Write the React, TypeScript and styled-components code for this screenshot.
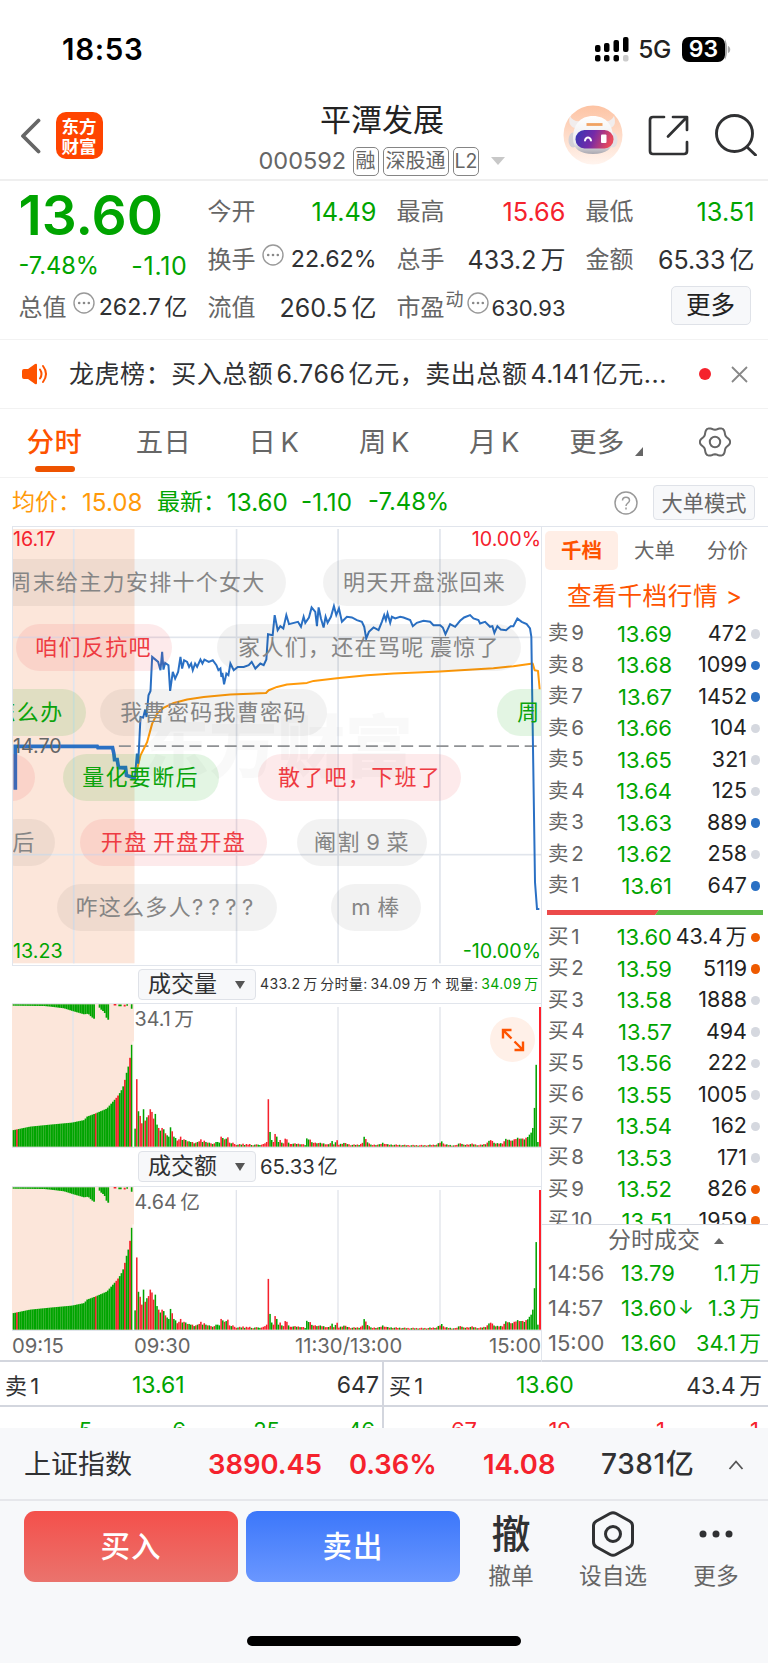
import React from "react";
import styled, { createGlobalStyle } from "styled-components";

const C = {
  green: "#00a400",
  red: "#f5222d",
  orange: "#fe5300",
  ink: "#303133",
  gray: "#666666",
  line: "#e1e5ec",
  soft: "#f7f8fa",
};

const Global = createGlobalStyle`
  *, *::before, *::after { box-sizing: border-box; }
  html, body { margin: 0; padding: 0; background: #fff; }
  body { font-family: Inter, "Noto Sans CJK SC", sans-serif; color: ${C.ink}; }
`;

const Screen = styled.main`
  width: 768px;
  height: 1663px;
  overflow: hidden;
  background: #fff;
  display: flex;
  flex-direction: column;
`;

interface TextProps {
  $size?: number;
  $color?: string;
  $weight?: number;
  $track?: number;
  $w?: number;
  $align?: string;
}

const Text = styled.span<TextProps>`
  display: block;
  flex: none;
  white-space: nowrap;
  font-size: ${(p) => p.$size ?? 24}px;
  color: ${(p) => p.$color ?? C.ink};
  font-weight: ${(p) => p.$weight ?? 400};
  letter-spacing: ${(p) => p.$track ?? 0}px;
  width: ${(p) => (p.$w ? `${p.$w}px` : "auto")};
  text-align: ${(p) => p.$align ?? "left"};
  line-height: 1.2;
`;

const Tight = styled(Text)`
  word-spacing: -3px;
`;

/* ---------- status bar ---------- */

const StatusBar = styled.header`
  height: 80px;
  padding: 19px 37px 0 62px;
  display: flex;
  align-items: center;
  justify-content: space-between;
  flex: none;
`;

const StatusRight = styled.div`
  display: flex;
  align-items: center;
`;

const Battery = styled.div`
  width: 43px;
  height: 25px;
  margin-left: 11px;
  border-radius: 7px;
  background: #000;
  color: #fff;
  font-size: 23px;
  font-weight: 600;
  line-height: 25px;
  text-align: center;
`;

/* ---------- title bar ---------- */

const TitleBar = styled.div`
  height: 101px;
  flex: none;
  border-bottom: 2px solid #efefef;
  display: grid;
  grid-template-columns: 256px 1fr 260px;
`;

const TitleLeft = styled.div`
  display: flex;
  align-items: center;
  padding: 12px 0 0 20px;
  gap: 14.5px;
`;

const Logo = styled.div`
  width: 47px;
  height: 47px;
  border-radius: 10px;
  background: #ff4400;
  color: #fff;
  font-family: "Noto Sans CJK SC", sans-serif;
  font-weight: 700;
  font-size: 17.5px;
  line-height: 19.5px;
  text-align: center;
  padding-top: 4px;
`;

const TitleMid = styled.div`
  display: flex;
  flex-direction: column;
  align-items: center;
  padding-top: 19px;
`;

const StockName = styled.h1`
  margin: 0;
  font-size: 31px;
  font-weight: 400;
  line-height: 42px;
  color: #222;
`;

const CodeRow = styled.div`
  height: 30px;
  margin-top: 5px;
  display: flex;
  align-items: center;
  gap: 4px;
`;

const Badge = styled.span<{ $snug?: boolean }>`
  border: 1.5px solid #858585;
  border-radius: 5px;
  height: 29px;
  padding: 0 ${(p) => (p.$snug ? 1 : 2)}px;
  font-size: ${(p) => (p.$snug ? 19.5 : 20)}px;
  line-height: 26px;
  color: ${C.gray};
`;

const TitleRight = styled.div`
  display: flex;
  align-items: center;
  padding: 11px 11px 0 54.5px;
  justify-content: space-between;
`;

/* ---------- quote ---------- */

const Quote = styled.section`
  height: 159px;
  flex: none;
  border-bottom: 1.5px solid #f2f2f2;
  padding: 7px 13px 0 18.5px;
  display: grid;
  grid-template-columns: repeat(4, 169px);
  column-gap: 20px;
  grid-template-rows: 48px 48px 48px;
`;

const Cell = styled.div`
  display: flex;
  align-items: center;
  justify-content: space-between;
`;

const BigPrice = styled(Cell)`
  padding-top: 6px;
`;

const PriceDelta = styled(Cell)`
  padding-top: 12px;
`;

const Group = styled.div`
  display: flex;
  align-items: center;
`;

const MoreButton = styled.button`
  width: 80px;
  height: 39px;
  margin: 0 4px 6px auto;
  padding: 0;
  border: 1.5px solid #dfe2e8;
  border-radius: 5px;
  background: ${C.soft};
  font: inherit;
  font-size: 24.5px;
  line-height: 34px;
  color: #222;
`;

const Raised = styled.span`
  align-self: flex-start;
  font-size: 18px;
  line-height: 20px;
  margin: -4px 3px 0 1px;
  color: ${C.gray};
`;

/* ---------- news ---------- */

const News = styled.section`
  height: 69px;
  flex: none;
  border-bottom: 1.5px solid #f2f2f2;
  padding: 0 20px 0 22px;
  display: flex;
  align-items: center;
`;

const NewsText = styled(Text)`
  margin-left: 21px;
  word-spacing: -4.5px;
`;

const RedDot = styled.i`
  width: 12px;
  height: 12px;
  border-radius: 50%;
  background: ${C.red};
  margin-left: auto;
`;

const CloseSvg = styled.svg`
  margin-left: 20px;
`;

/* ---------- tabs ---------- */

const Tabs = styled.nav`
  height: 69px;
  flex: none;
  border-bottom: 1.5px solid #f2f2f2;
  display: grid;
  grid-template-columns: 109px 109px 112px 109px 111px 112px 1fr;
`;

const Tab = styled.div<{ $on?: boolean }>`
  display: flex;
  flex-direction: column;
  align-items: center;
  padding-top: 14px;
  font-size: 27.3px;
  line-height: 40px;
  letter-spacing: 0.5px;
  word-spacing: -4px;
  color: ${(p) => (p.$on ? C.orange : C.gray)};
  font-weight: ${(p) => (p.$on ? 500 : 400)};
  &::after {
    content: "";
    width: 40px;
    height: 6px;
    margin-top: 3px;
    border-radius: 3px;
    background: ${(p) => (p.$on ? "#ee5300" : "transparent")};
  }
`;

const Corner = styled.i`
  display: inline-block;
  margin-left: 10px;
  border-left: 8px solid transparent;
  border-bottom: 9px solid ${C.gray};
  transform: translateY(4px);
`;

const GearSvg = styled.svg`
  margin-top: 3px;
`;

/* ---------- summary ---------- */

const Summary = styled.section`
  height: 48px;
  flex: none;
  padding: 1px 13px 0 12px;
  display: flex;
  align-items: center;
`;

const ModeButton = styled.button`
  width: 102px;
  height: 35px;
  margin-left: 15px;
  padding: 0;
  border: 1.5px solid #dfe2e8;
  border-radius: 4px;
  background: ${C.soft};
  font: inherit;
  font-size: 21.2px;
  line-height: 30px;
  color: ${C.gray};
`;

/* ---------- main area ---------- */

const Main = styled.section`
  height: 836px;
  flex: none;
  display: grid;
  grid-template-columns: 542px 226px;
  border-bottom: 2px solid #d3d6de;
`;

const ChartColumn = styled.div`
  padding-left: 12px;
  border-right: 1px solid ${C.line};
  display: flex;
  flex-direction: column;
`;

const PriceChart = styled.div`
  position: relative;
  height: 440px;
  flex: none;
  overflow: hidden;
  border-top: 1.5px solid ${C.line};
  border-left: 1px solid ${C.line};
  border-bottom: 1.5px solid ${C.line};
`;

const Plot = styled.svg`
  display: block;
  width: 100%;
  height: 100%;
`;

const AxisMark = styled.span<{ $color: string; $right?: boolean; $top: number }>`
  position: absolute;
  top: ${(p) => p.$top}px;
  ${(p) => (p.$right ? "right: 0;" : "left: 0;")}
  font-size: 19.7px;
  line-height: 22px;
  color: ${(p) => p.$color};
`;

const tones = {
  gray: ["rgba(0,0,0,.05)", "#858585"],
  red: ["rgba(235,50,60,.1)", "#ee3b42"],
  green: ["rgba(0,164,0,.11)", "#0ba30b"],
};
type Tone = keyof typeof tones;

const Bullet = styled.span<{ $tone: Tone; $x: number; $row: number; $w: number }>`
  position: absolute;
  left: ${(p) => p.$x}px;
  top: ${(p) => 32 + p.$row * 65}px;
  width: ${(p) => p.$w}px;
  height: 47px;
  border-radius: 24px;
  background: ${(p) => tones[p.$tone][0]};
  color: ${(p) => tones[p.$tone][1]};
  text-align: center;
  white-space: pre;
  font-size: 22px;
  letter-spacing: 1.3px;
  word-spacing: -2px;
  line-height: 46px;
`;

const Marks = styled.span`
  letter-spacing: 5.4px;
`;

const Watermark = styled.span`
  position: absolute;
  left: 128px;
  top: 176px;
  font-family: "Noto Sans CJK SC", sans-serif;
  font-weight: 900;
  font-size: 68px;
  line-height: 80px;
  color: rgba(90, 90, 100, 0.04);
`;

const IndicatorBar = styled.div<{ $h: number }>`
  height: ${(p) => p.$h}px;
  flex: none;
  border-bottom: 1.5px solid ${C.line};
  padding-left: 126px;
  display: flex;
  align-items: center;
`;

const IndicatorText = styled(Text)`
  word-spacing: -1.5px;
`;

const Green = styled.b`
  font-weight: 400;
  color: ${C.green};
`;

const Select = styled.div`
  width: 118px;
  height: 31px;
  flex: none;
  border: 1.5px solid #dfe2e8;
  border-radius: 4px;
  background: ${C.soft};
  display: flex;
  align-items: center;
  justify-content: space-between;
  padding: 0 10px 0 9px;
  margin-right: 4px;
`;

const DownCaret = styled.i`
  border-left: 5px solid transparent;
  border-right: 5px solid transparent;
  border-top: 8px solid #555;
`;

const UpCaret = styled.i`
  border-left: 5.5px solid transparent;
  border-right: 5.5px solid transparent;
  border-bottom: 6.5px solid #666;
  margin-left: 14px;
`;

const VolumeChart = styled.div`
  position: relative;
  height: 144px;
  flex: none;
  border-bottom: 1.5px solid ${C.line};
`;

const PeakMark = styled.span`
  position: absolute;
  left: 122.5px;
  top: 1px;
  font-size: 19.7px;
  line-height: 28px;
  word-spacing: -2px;
  color: ${C.gray};
`;

const Expand = styled.span`
  position: absolute;
  left: 478px;
  top: 13px;
  width: 45px;
  height: 45px;
  border-radius: 50%;
  background: #fff0e8;
  display: flex;
  align-items: center;
  justify-content: center;
`;

const TimeAxis = styled.div`
  flex: 1;
  display: grid;
  grid-template-columns: 122px 161px 1fr auto;
  align-items: center;
`;

/* ---------- order book ---------- */

const Book = styled.aside`
  display: flex;
  flex-direction: column;
  border-top: 1.5px solid ${C.line};
  min-width: 0;
`;

const BookTabs = styled.div`
  height: 39px;
  margin-top: 3.5px;
  padding-left: 3px;
  display: grid;
  grid-template-columns: 73px 73px 73px;
  flex: none;
`;

const BookTab = styled.div<{ $on?: boolean }>`
  border-radius: 5px;
  background: ${(p) => (p.$on ? "#ffeee6" : "transparent")};
  color: ${(p) => (p.$on ? C.orange : C.gray)};
  font-weight: ${(p) => (p.$on ? 700 : 400)};
  font-size: 20.5px;
  line-height: 39px;
  text-align: center;
`;

const BookLink = styled.div`
  height: 48.5px;
  flex: none;
  color: ${C.orange};
  font-size: 24.6px;
  line-height: 52px;
  letter-spacing: 0.6px;
  padding-left: 25px;
  white-space: nowrap;
`;

const Levels = styled.div<{ $h: number }>`
  height: ${(p) => p.$h}px;
  flex: none;
  overflow: hidden;
`;

const Level = styled.div`
  height: 31.5px;
  padding-left: 6px;
  display: grid;
  grid-template-columns: 50px 74px 75px 13px;
  align-items: center;
`;

const Dot = styled.i<{ $c: string }>`
  width: 9.5px;
  height: 9.5px;
  border-radius: 50%;
  background: ${(p) => p.$c};
  justify-self: end;
`;

const Ratio = styled.svg`
  display: block;
  flex: none;
  width: 216px;
  height: 5px;
  margin: 8px 0 7px 5px;
`;

const TradesHead = styled.div`
  height: 33px;
  flex: none;
  border-top: 1.5px solid #d9dce3;
  padding-left: 66px;
  display: flex;
  align-items: center;
`;

const Trade = styled.div`
  height: 35px;
  flex: none;
  padding: 0 7px 2px 6px;
  display: grid;
  grid-template-columns: 73px 57px 16px 1fr;
  align-items: center;
`;

/* ---------- best quotes ---------- */

const BestRow = styled.div`
  height: 45px;
  flex: none;
  display: grid;
  grid-template-columns: 382px 386px;
  border-bottom: 2px solid #d3d6de;
`;

const Best = styled.div`
  display: grid;
  grid-template-columns: 56px 1fr auto;
  align-items: center;
  padding: 5px 3px 0 5px;
  & + & {
    border-left: 2px solid #d3d6de;
    padding-right: 6px;
  }
`;

const BestPrice = styled.div`
  display: flex;
  padding-left: 71px;
`;

const QueueRow = styled.div`
  height: 21px;
  flex: none;
  overflow: hidden;
  display: grid;
  grid-template-columns: 382px 386px;
`;

const Queue = styled.div<{ $c: string }>`
  display: grid;
  grid-template-columns: 92px 94px 94px 95px;
  font-size: 22px;
  line-height: 26px;
  padding-top: 10px;
  text-align: right;
  color: ${(p) => p.$c};
  & + & {
    border-left: 2px solid #d3d6de;
    grid-template-columns: 93px 94px 94px 94px;
  }
`;

/* ---------- footer ---------- */

const IndexBar = styled.section`
  height: 72.5px;
  flex: none;
  background: ${C.soft};
  border-bottom: 2px solid #e6e7eb;
  padding: 3px 24px 0;
  display: flex;
  align-items: center;
`;

const Footer = styled.footer`
  flex: 1;
  background: ${C.soft};
  display: flex;
  flex-direction: column;
  align-items: center;
  justify-content: space-between;
  padding: 10.5px 0 17px;
`;

const Actions = styled.div`
  width: 100%;
  display: flex;
  padding-left: 24px;
`;

const TradeButton = styled.button<{ $from: string; $to: string }>`
  width: 214px;
  height: 71px;
  margin-right: 8px;
  padding: 0;
  border: 0;
  border-radius: 11px;
  background: linear-gradient(${(p) => p.$from}, ${(p) => p.$to});
  color: #fff;
  font: inherit;
  font-size: 29.5px;
  font-weight: 500;
  line-height: 69px;
  letter-spacing: 1px;
`;

const Action = styled.div<{ $w: number }>`
  width: ${(p) => p.$w}px;
  display: flex;
  flex-direction: column;
  align-items: center;
  gap: 4.5px;
`;

const ActionIcon = styled.div`
  height: 46px;
  display: flex;
  align-items: center;
  font-size: 39px;
  font-weight: 500;
  line-height: 46px;
`;

const HomeIndicator = styled.div`
  width: 274px;
  height: 10px;
  border-radius: 5px;
  background: #000;
`;

/* ---------- chart data ---------- */

const pricePath =
  "44,806 44,678 290,678 292,682 336,683 340,700 342,718 350,720 354,742 375,745 378,765 385,768 403,775 409,700 413,730 420,590 428,592 434,568 438,590 444,525 450,512 455,410 473,425 480,450 485,395 489,448 494,428 504,435 509,512 517,455 524,475 533,455 540,410 545,445 551,420 560,425 566,440 572,430 577,450 584,430 590,440 600,418 606,430 612,418 625,425 637,420 648,435 654,450 660,445 663,470 666,458 671,492 678,460 684,465 690,430 700,450 712,440 730,440 745,435 754,425 765,445 780,430 790,435 798,418 803,342 817,345 823,285 832,330 840,318 849,325 858,285 866,312 893,305 902,320 910,290 915,308 926,292 934,262 945,275 950,318 955,262 962,295 970,322 976,290 982,308 992,290 1001,258 1008,285 1016,265 1025,305 1040,290 1055,292 1070,300 1085,305 1092,320 1098,355 1106,335 1120,322 1135,330 1145,305 1152,285 1157,300 1162,280 1170,308 1175,290 1185,295 1200,290 1210,292 1230,300 1238,318 1250,308 1270,302 1290,305 1300,315 1320,315 1328,322 1336,342 1350,312 1365,320 1380,302 1392,292 1410,285 1420,295 1435,300 1440,310 1455,305 1470,320 1477,318 1483,338 1492,318 1502,328 1518,330 1532,318 1540,318 1552,295 1565,305 1580,312 1590,325 1594,350 1605,1085 1611,1165 1618,1165";
const averagePath =
  "403,775 420,705 440,665 455,610 470,580 490,562 520,548 560,538 610,530 690,523 797,518 805,510 830,500 860,493 920,488 940,482 1010,474 1100,465 1180,460 1320,454 1480,444 1540,438 1598,430 1604,450 1614,452 1619,507";

const lerp = (knots: number[][], x: number) => {
  for (let i = 1; i < knots.length; i++) {
    if (x <= knots[i][0]) {
      const [x0, y0] = knots[i - 1];
      const [x1, y1] = knots[i];
      return y0 + ((y1 - y0) * (x - x0)) / (x1 - x0);
    }
  }
  return knots[knots.length - 1][1];
};

const auctionKnots = [[37, 49], [90, 60], [150, 66], [215, 72], [254, 80], [258, 89], [285, 99], [320, 114], [350, 148], [362, 165], [371, 185], [377, 214], [383, 233], [389, 262], [396, 315]];
const auctionRed = [2, 48, 60, 61, 65, 68];
const hangKnots = [[37, 4], [130, 5], [150, 7], [190, 12], [215, 20], [250, 30], [262, 28], [272, 38], [284, 46]];
const hangTail = [10, 16, 20, 26, 40, 46];

/* one entry per minute: bar height, negative for a falling minute */
const openBars = [-54, 202, -106, 92, 70, -112, 78, -88, 94, 112, 104, 84, -98, -66, 56, -48, 56, -52, 40, -34, -30, -58, 46, -30, -26, 18, 22, 30, -20, 22, -20, 16, -16, -14, 14, -10, 12, -14, 16, 22, -14, 18, -14, 12, -12, 10, -8, 10, -14, -14, -12, 30, -26, 22, -24, 28, 12, -10, 12, 8, 5, -6, 8, -6, 9, -5, 8, 6, 8, -5, 4, -6, 7, -6, -5, 6, 8, 10, 14, 142, -44, -20, 14, 38, -30, -14, 20, -12, 10, 24, 22, -12, 8];
const laterKnots = [[0, 9], [5, 8], [8, 5], [9, 24], [11, 21], [12, 12], [18, 10], [22, 6], [24, 16], [25, 8], [27, 18], [28, 6], [31, 11], [35, 5], [40, 6], [42, 10], [43, 30], [45, 14], [47, 5], [52, 6], [54, 11], [57, 6], [70, 4], [80, 4], [86, 6], [89, 15], [91, 6], [97, 3], [100, 11], [102, 5], [107, 8], [111, 4], [115, 8], [118, 20], [121, 9], [125, 10], [127, 22], [131, 18], [134, 26], [138, 22], [140, 30], [142, 42], [143, 56], [144, 116], [145, 245], [146, 14], [147, 0]];

interface Bar { x: number; h: number; up: boolean; w: number; session: boolean }

const bars: Bar[] = [];
for (let i = 0; i < 70; i++) {
  const x = 38 + i * 5.14;
  bars.push({ x, h: lerp(auctionKnots, x + 2), up: auctionRed.includes(i), w: 5.3, session: false });
}
openBars.forEach((h, i) => bars.push({ x: 403 + i * 5.06, h: Math.abs(h), up: h > 0, w: 4.6, session: true }));
for (let i = 0; i < 148; i++) {
  const wobble = ((i * 7) % 5) / 5;
  bars.push({
    x: 402 + (93 + i) * 5.06,
    h: Math.max(0, lerp(laterKnots, i) + (i < 141 ? wobble * 3 - 1 : 0)),
    up: i < 140 && (i * 11) % 7 < 4 && i !== 43 && i !== 9,
    w: 4.6,
    session: true,
  });
}

function VolumePlot({ scale }: { scale: number }) {
  const base = 427;
  return (
    <Plot viewBox="36 0 1587 428" preserveAspectRatio="none">
      <rect x="36" y="0" width="366" height="427" fill="#fce6da" />
      {[218, 708, 1013, 1319].map((x) => (
        <rect key={x} x={x - 1} y="9" width="4" height="418" fill="#e1e4eb" />
      ))}
      {bars.map((b, i) => {
        const h = b.session ? b.h * scale : b.h;
        return <rect key={i} x={b.x} y={base - h} width={b.w} height={h} fill={b.up ? C.red : C.green} />;
      })}
      <rect x="397" y="112" width="5" height="315" fill="#fff" opacity=".7" />
      <rect x="1617" y="9" width="6" height="418" fill="#ff1f2b" />
      {Array.from({ length: 48 }, (_, i) => {
        const x = 38 + i * 5.14;
        return <rect key={i} x={x} y="1" width="5.3" height={lerp(hangKnots, x)} fill={C.green} />;
      })}
      {hangTail.map((h, i) => (
        <rect key={i} x={296 + i * 5.2} y="1" width="5.4" height={h} fill={C.green} />
      ))}
      <path d="M341 2h8M371 5h6" stroke={C.red} strokeWidth="5" />
      <path d="M355 4h10M379 3h5M395 1v13" stroke={C.green} strokeWidth="5" />
    </Plot>
  );
}

function PricePlot() {
  return (
    <Plot viewBox="37 21 1586 1312" preserveAspectRatio="none">
      <rect x="37" y="27" width="365" height="1301" fill="#fce6da" />
      <g fill="#e1e5ec">
        {[217, 706, 1011, 1317].map((x) => (
          <rect key={x} x={x} y="27" width="5" height="1301" />
        ))}
        <rect x="37" y="349" width="1586" height="5" />
        <rect x="37" y="1000" width="1586" height="5" />
      </g>
      <path d="M355 677.5H1618" stroke="#8f9194" strokeWidth="5.5" strokeDasharray="36 17" />
      <polyline points={averagePath} fill="none" stroke="#ff9a0a" strokeWidth="6" strokeLinejoin="round" />
      <polyline points={pricePath} fill="none" stroke="#2a70c4" strokeWidth="6" strokeLinejoin="miter" />
      <path d="M44 808V678H290L292 682H336L340 700L342 718H350L354 742H375L378 765L403 773" fill="none" stroke="#2a70c4" strokeWidth="11" />
    </Plot>
  );
}

const bullets: [Tone, number, number, number, React.ReactNode][] = [
  ["gray", 0, -24, 297, "周末给主力安排十个女大"],
  ["gray", 0, 310, 203, "明天开盘涨回来"],
  ["red", 1, 2.5, 156, "咱们反抗吧"],
  ["gray", 1, 204, 304, "家人们，还在骂呢 震惊了"],
  ["green", 2, -42, 115, "怎么办"],
  ["gray", 2, 87, 227, "我曹密码我曹密码"],
  ["green", 2, 483.5, 88, "周一"],
  ["red", 3, -70, 92, "龟"],
  ["green", 3, 49.5, 156, "量化要断后"],
  ["red", 3, 245, 203, "散了吧，下班了"],
  ["gray", 4, -20, 62, "后"],
  ["red", 4, 67, 187, "开盘 开盘开盘"],
  ["gray", 4, 284, 130, "阉割 9 菜"],
  ["gray", 5, 44, 220, <React.Fragment key="m">咋这么多人<Marks>????</Marks></React.Fragment>],
  ["gray", 5, 318, 90, "m 棒"],
];

const IDLE = "#d5d8df";
const BLUE = "#2a70c4";
const HOT = "#ee5a00";

const sells: [string, string, string, string][] = [
  ["9", "13.69", "472", IDLE],
  ["8", "13.68", "1099", BLUE],
  ["7", "13.67", "1452", BLUE],
  ["6", "13.66", "104", IDLE],
  ["5", "13.65", "321", IDLE],
  ["4", "13.64", "125", IDLE],
  ["3", "13.63", "889", BLUE],
  ["2", "13.62", "258", IDLE],
  ["1", "13.61", "647", BLUE],
];
const buys: [string, string, string, string][] = [
  ["1", "13.60", "43.4 万", HOT],
  ["2", "13.59", "5119", HOT],
  ["3", "13.58", "1888", IDLE],
  ["4", "13.57", "494", IDLE],
  ["5", "13.56", "222", IDLE],
  ["6", "13.55", "1005", IDLE],
  ["7", "13.54", "162", IDLE],
  ["8", "13.53", "171", IDLE],
  ["9", "13.52", "826", HOT],
  ["10", "13.51", "1959", HOT],
];
const trades = [
  ["14:56", "13.79", "", "1.1 万"],
  ["14:57", "13.60", "↓", "1.3 万"],
  ["15:00", "13.60", "", "34.1 万"],
];

function LevelRow({ side, row }: { side: string; row: [string, string, string, string] }) {
  return (
    <Level>
      <Tight $size={20.5} $color={C.gray}>{`${side} ${row[0]}`}</Tight>
      <Text $size={22} $color={C.green} $align="right">{row[1]}</Text>
      <Tight $size={21.5} $color="#222" $align="right">{row[2]}</Tight>
      <Dot $c={row[3]} />
    </Level>
  );
}

/* ---------- icons ---------- */

const InfoSvg = styled.svg`
  align-self: flex-start;
  margin: -2px 0 0 6px;
  flex: none;
`;

const NearInfo = styled.span`
  align-self: flex-start;
  display: flex;
  margin-left: -6px;
`;

const Info = () => (
  <InfoSvg width="22" height="22" viewBox="0 0 22 22">
    <circle cx="11" cy="11" r="10" fill="none" stroke="#999" strokeWidth="1.4" />
    <g fill="#888">
      <circle cx="6.2" cy="11" r="1.3" />
      <circle cx="11" cy="11" r="1.3" />
      <circle cx="15.8" cy="11" r="1.3" />
    </g>
  </InfoSvg>
);

const Robot = () => (
  <svg width="60" height="60" viewBox="0 0 60 60">
    <defs>
      <linearGradient id="halo" x1="0" y1="0" x2="0" y2="1">
        <stop offset="0" stopColor="#fdc3a3" />
        <stop offset="1" stopColor="#fff4ee" />
      </linearGradient>
      <linearGradient id="visor" x1="0" y1="0" x2="1" y2="0.2">
        <stop offset="0" stopColor="#3338b5" />
        <stop offset=".5" stopColor="#7429a8" />
        <stop offset="1" stopColor="#e8495c" />
      </linearGradient>
      <linearGradient id="shell" x1="0" y1="0" x2="0" y2="1">
        <stop offset="0" stopColor="#fff" />
        <stop offset=".7" stopColor="#ececee" />
        <stop offset="1" stopColor="#aaa8b0" />
      </linearGradient>
    </defs>
    <circle cx="30" cy="30" r="29.5" fill="url(#halo)" />
    <path d="M7 11c-2 6 0 11 5 12l6-7c-5 1-9-1-11-5zM51 11c2 6 1 11-4 12l-6-7c5 1 8-1 10-5z" fill="#f1eded" />
    <ellipse cx="10" cy="35" rx="4.5" ry="7.5" fill="#d3d1d6" />
    <ellipse cx="50" cy="35" rx="4.5" ry="7.5" fill="#e3e0e3" />
    <path d="M30 11c13 0 20 9 20 22 0 11-7 16-20 16s-20-5-20-16c0-13 7-22 20-22z" fill="url(#shell)" />
    <rect x="12.5" y="25" width="38" height="18.5" rx="9" fill="url(#visor)" />
    <path d="M23.5 19.5h16" stroke="#f0a263" strokeWidth="2.8" />
    <path d="M22 35.5c1-4 5-4 6 0" fill="none" stroke="#fff" strokeWidth="2" strokeLinecap="round" />
    <rect x="38" y="29.5" width="5.5" height="8.5" rx="1" fill="#fff" />
  </svg>
);

const gearPoints = () => {
  const pts: string[] = [];
  for (let a = 0; a < 360; a += 6) {
    const r = 13.7 + 1.5 * Math.cos((a * 6 * Math.PI) / 180);
    const t = ((a - 60) * Math.PI) / 180;
    pts.push(`${(16 + r * Math.cos(t)).toFixed(2)},${(16 + r * Math.sin(t)).toFixed(2)}`);
  }
  return pts.join(" ");
};

export default function App() {
  return (
    <Screen>
      <Global />
      <StatusBar>
        <Text $size={29.5} $weight={600} $color="#000" $track={0.7}>18:53</Text>
        <StatusRight>
          <svg width="35" height="25" viewBox="0 0 35 25">
            <g fill="#000">
              <rect x="0" y="8" width="5.5" height="7" rx="2" />
              <rect x="9" y="6" width="5.5" height="9" rx="2" />
              <rect x="18.5" y="3" width="5.5" height="12" rx="2" />
              <rect x="28" y="0" width="5.5" height="15" rx="2" />
              <rect x="0" y="18" width="5.5" height="6.5" rx="2" />
              <rect x="9" y="18" width="5.5" height="6.5" rx="2" />
              <rect x="18.5" y="18" width="5.5" height="6.5" rx="2" />
              <rect x="28" y="18" width="5.5" height="6.5" rx="2" fill="#ccc" />
            </g>
          </svg>
          <Text $size={24.5} $weight={500} $color="#222" $w={41} $align="right" $track={-0.4}>5G</Text>
          <Battery>93</Battery>
          <svg width="6" height="25" viewBox="0 0 6 25">
            <path d="M0 2c3 6 3 15 0 21z" fill="#aaa" />
            <path d="M3 9c3 1 3 6 0 7z" fill="#aaa" />
          </svg>
        </StatusRight>
      </StatusBar>

      <TitleBar>
        <TitleLeft>
          <svg width="21" height="36" viewBox="0 0 21 36">
            <path d="M18.5 2.5L3 18l15.5 15.5" fill="none" stroke={C.gray} strokeWidth="3.8" strokeLinecap="round" strokeLinejoin="round" />
          </svg>
          <Logo>东方<br />财富</Logo>
        </TitleLeft>
        <TitleMid>
          <StockName>平潭发展</StockName>
          <CodeRow>
            <Text $size={23.5} $color={C.gray} $w={90}>000592</Text>
            <Badge>融</Badge>
            <Badge>深股通</Badge>
            <Badge $snug>L2</Badge>
            <svg width="22" height="8" viewBox="0 0 22 8"><path d="M8 0h14l-7 8z" fill="#c8c8c8" /></svg>
          </CodeRow>
        </TitleMid>
        <TitleRight>
          <Robot />
          <svg width="41" height="41" viewBox="0 0 41 41" fill="none" stroke="#303133" strokeWidth="2.7" strokeLinecap="round">
            <path d="M16 2H5q-3 0-3 3v31q0 3 3 3h31q3 0 3-3V27M25 2h14v13M38 3L20 21.5" strokeLinejoin="round" />
          </svg>
          <svg width="42" height="42" viewBox="0 0 42 42" fill="none" stroke="#303133" strokeWidth="2.9" strokeLinecap="round">
            <circle cx="19.5" cy="19.5" r="18" />
            <path d="M32 33l8.5 8" />
          </svg>
        </TitleRight>
      </TitleBar>

      <Quote>
        <BigPrice><Text $size={55} $weight={600} $color={C.green}>13.60</Text></BigPrice>
        <Cell><Text $color={C.gray}>今开</Text><Text $size={25.3} $color={C.green}>14.49</Text></Cell>
        <Cell><Text $color={C.gray}>最高</Text><Text $size={25.3} $color={C.red}>15.66</Text></Cell>
        <Cell><Text $color={C.gray}>最低</Text><Text $size={25.3} $color={C.green}>13.51</Text></Cell>

        <PriceDelta>
          <Text $size={23.6} $color={C.green}>-7.48%</Text>
          <Text $size={25} $track={0.7} $color={C.green}>-1.10</Text>
        </PriceDelta>
        <Cell><Group><Text $color={C.gray}>换手</Text><Info /></Group><Text $size={23.2}>22.62%</Text></Cell>
        <Cell><Text $color={C.gray}>总手</Text><Tight $size={25}>433.2 万</Tight></Cell>
        <Cell><Text $color={C.gray}>金额</Text><Tight $size={25}>65.33 亿</Tight></Cell>

        <Cell><Group><Text $color={C.gray}>总值</Text><Info /></Group><Tight $size={23.2}>262.7 亿</Tight></Cell>
        <Cell><Text $color={C.gray}>流值</Text><Tight $size={25}>260.5 亿</Tight></Cell>
        <Cell>
          <Group><Text $color={C.gray}>市盈</Text><Raised>动</Raised><NearInfo><Info /></NearInfo></Group>
          <Text $size={22}>630.93</Text>
        </Cell>
        <Cell><MoreButton>更多</MoreButton></Cell>
      </Quote>

      <News>
        <svg width="26" height="22" viewBox="0 0 26 22">
          <path d="M2 6h4l7-5q2-1 2 1v18q0 2-2 1l-7-5H2q-2 0-2-2V8q0-2 2-2z" fill="#fe5300" />
          <path d="M18 6.5q3 4.5 0 9M21 3q6 8 0 16" fill="none" stroke="#fe5300" strokeWidth="2" strokeLinecap="round" />
        </svg>
        <NewsText $size={25} $track={0.55}>龙虎榜：买入总额 6.766 亿元，卖出总额 4.141 亿元...</NewsText>
        <RedDot />
        <CloseSvg width="17" height="17" viewBox="0 0 17 17">
          <path d="M1 1l15 15M16 1L1 16" stroke="#888" strokeWidth="1.8" />
        </CloseSvg>
      </News>

      <Tabs>
        <Tab $on>分时</Tab>
        <Tab>五日</Tab>
        <Tab>日 K</Tab>
        <Tab>周 K</Tab>
        <Tab>月 K</Tab>
        <Tab><span>更多<Corner /></span></Tab>
        <Tab>
          <GearSvg width="32" height="32" viewBox="0 0 32 32" fill="none" stroke={C.gray} strokeWidth="2">
            <polygon points={gearPoints()} strokeLinejoin="round" />
            <circle cx="16" cy="16" r="5.2" />
          </GearSvg>
        </Tab>
      </Tabs>

      <Summary>
        <Text $size={23} $color="#ff9a0a" $w={70}>均价：</Text>
        <Text $size={24.2} $color="#ff9a0a" $w={75}>15.08</Text>
        <Text $size={23} $color={C.green} $w={70}>最新：</Text>
        <Text $size={24.2} $color={C.green} $w={74}>13.60</Text>
        <Text $size={24.2} $color={C.green} $w={67}>-1.10</Text>
        <Text $size={23.8} $color={C.green} $w={246}>-7.48%</Text>
        <svg width="24" height="24" viewBox="0 0 24 24" fill="none" stroke="#999" strokeWidth="1.5">
          <circle cx="12" cy="12" r="11" />
          <path d="M8.5 9.5c0-4.5 7-4.5 7 0 0 2.5-3.5 2.5-3.5 5.5M12 16.5v2" />
        </svg>
        <ModeButton>大单模式</ModeButton>
      </Summary>

      <Main>
        <ChartColumn>
          <PriceChart>
            <Watermark>东方财富</Watermark>
            <PricePlot />
            {bullets.map(([tone, row, x, w, text]) => (
              <Bullet key={`${row}-${x}`} $tone={tone} $row={row} $x={x} $w={w}>{text}</Bullet>
            ))}
            <AxisMark $color={C.red} $top={1}>16.17</AxisMark>
            <AxisMark $color={C.red} $top={1} $right>10.00%</AxisMark>
            <AxisMark $color={C.gray} $top={208}>14.70</AxisMark>
            <AxisMark $color={C.green} $top={413}>13.23</AxisMark>
            <AxisMark $color={C.green} $top={413} $right>-10.00%</AxisMark>
          </PriceChart>
          <IndicatorBar $h={38}>
            <Select><Text $size={23}>成交量</Text><DownCaret /></Select>
            <IndicatorText $size={14} $track={0.35} $color="#333">433.2 万 分时量: 34.09 万 ↑ 现量: <Green>34.09 万</Green></IndicatorText>
          </IndicatorBar>
          <VolumeChart>
            <VolumePlot scale={1} />
            <PeakMark>34.1 万</PeakMark>
            <Expand>
              <svg width="24" height="24" viewBox="0 0 24 24" fill="none" stroke={C.orange} strokeWidth="2.4">
                <path d="M10.5 2H2v8.5M2.5 2.5l8 8M13.5 22H22v-8.5M21.5 21.5l-8-8" />
              </svg>
            </Expand>
          </VolumeChart>
          <IndicatorBar $h={38.5}>
            <Select><Text $size={23}>成交额</Text><DownCaret /></Select>
            <Tight $size={20.3}>65.33 亿</Tight>
          </IndicatorBar>
          <VolumeChart>
            <VolumePlot scale={1.07} />
            <PeakMark>4.64 亿</PeakMark>
          </VolumeChart>
          <TimeAxis>
            <Text $size={20.3} $color={C.gray}>09:15</Text>
            <Text $size={20.3} $color={C.gray}>09:30</Text>
            <Text $size={20.3} $color={C.gray}>11:30/13:00</Text>
            <Text $size={20.3} $color={C.gray}>15:00</Text>
          </TimeAxis>
        </ChartColumn>

        <Book>
          <BookTabs>
            <BookTab $on>千档</BookTab>
            <BookTab>大单</BookTab>
            <BookTab>分价</BookTab>
          </BookTabs>
          <BookLink>查看千档行情 &gt;</BookLink>
          <Levels $h={283.5}>
            {sells.map((r) => <LevelRow key={r[0]} side="卖" row={r} />)}
          </Levels>
          <Ratio viewBox="0 0 216 5">
            <path d="M0 0H112L108 5H0z" fill="#ec4a4a" />
            <path d="M112 0H216V5H108z" fill="#5cba47" />
          </Ratio>
          <Levels $h={302}>
            {buys.map((r) => <LevelRow key={r[0]} side="买" row={r} />)}
          </Levels>
          <TradesHead>
            <Text $size={23} $color={C.gray}>分时成交</Text>
            <UpCaret />
          </TradesHead>
          {trades.map(([time, price, mark, qty]) => (
            <Trade key={time}>
              <Text $size={22} $color={C.gray}>{time}</Text>
              <Text $size={22} $color={C.green}>{price}</Text>
              <Text $size={19} $color={C.green}>{mark}</Text>
              <Tight $size={21.8} $color={C.green} $align="right">{qty}</Tight>
            </Trade>
          ))}
        </Book>
      </Main>

      <BestRow>
        <Best>
          <Tight $size={22}>卖 1</Tight>
          <BestPrice><Text $size={23} $color={C.green}>13.61</Text></BestPrice>
          <Text $size={23}>647</Text>
        </Best>
        <Best>
          <Tight $size={22}>买 1</Tight>
          <BestPrice><Text $size={23} $color={C.green}>13.60</Text></BestPrice>
          <Tight $size={22.8}>43.4 万</Tight>
        </Best>
      </BestRow>
      <QueueRow>
        <Queue $c={C.green}><span>5</span><span>6</span><span>25</span><span>46</span></Queue>
        <Queue $c={C.red}><span>67</span><span>19</span><span>1</span><span>1</span></Queue>
      </QueueRow>

      <IndexBar>
        <Text $size={27} $w={184}>上证指数</Text>
        <Text $size={27.4} $weight={600} $color={C.red} $w={141}>3890.45</Text>
        <Text $size={27.4} $weight={600} $color={C.red} $w={134}>0.36%</Text>
        <Text $size={27.4} $weight={600} $color={C.red} $w={118}>14.08</Text>
        <Text $size={28} $weight={500} $track={0.6} $w={127}>7381亿</Text>
        <svg width="16" height="10" viewBox="0 0 16 10">
          <path d="M1.5 9L8 1.5 14.5 9" fill="none" stroke="#555" strokeWidth="1.8" />
        </svg>
      </IndexBar>

      <Footer>
        <Actions>
          <TradeButton $from="#f4504b" $to="#ea736d">买入</TradeButton>
          <TradeButton $from="#3c77fa" $to="#6a97ff">卖出</TradeButton>
          <Action $w={86}>
            <ActionIcon>撤</ActionIcon>
            <Text $size={22.7} $color={C.gray}>撤单</Text>
          </Action>
          <Action $w={118}>
            <ActionIcon>
              <svg width="44" height="46" viewBox="0 0 44 46" fill="none" stroke="#303133" strokeWidth="3">
                <path d="M19 2.5q3-1.6 6 0l13.5 7.5q3 1.6 3 5v16q0 3.4-3 5L25 43.5q-3 1.6-6 0L5.5 36q-3-1.6-3-5V15q0-3.4 3-5z" />
                <circle cx="22" cy="23" r="7.5" />
              </svg>
            </ActionIcon>
            <Text $size={22.7} $color={C.gray}>设自选</Text>
          </Action>
          <Action $w={88}>
            <ActionIcon>
              <svg width="34" height="8" viewBox="0 0 34 8" fill="#303133">
                <circle cx="4" cy="4" r="3.5" />
                <circle cx="17" cy="4" r="3.5" />
                <circle cx="30" cy="4" r="3.5" />
              </svg>
            </ActionIcon>
            <Text $size={22.7} $color={C.gray}>更多</Text>
          </Action>
        </Actions>
        <HomeIndicator />
      </Footer>
    </Screen>
  );
}
